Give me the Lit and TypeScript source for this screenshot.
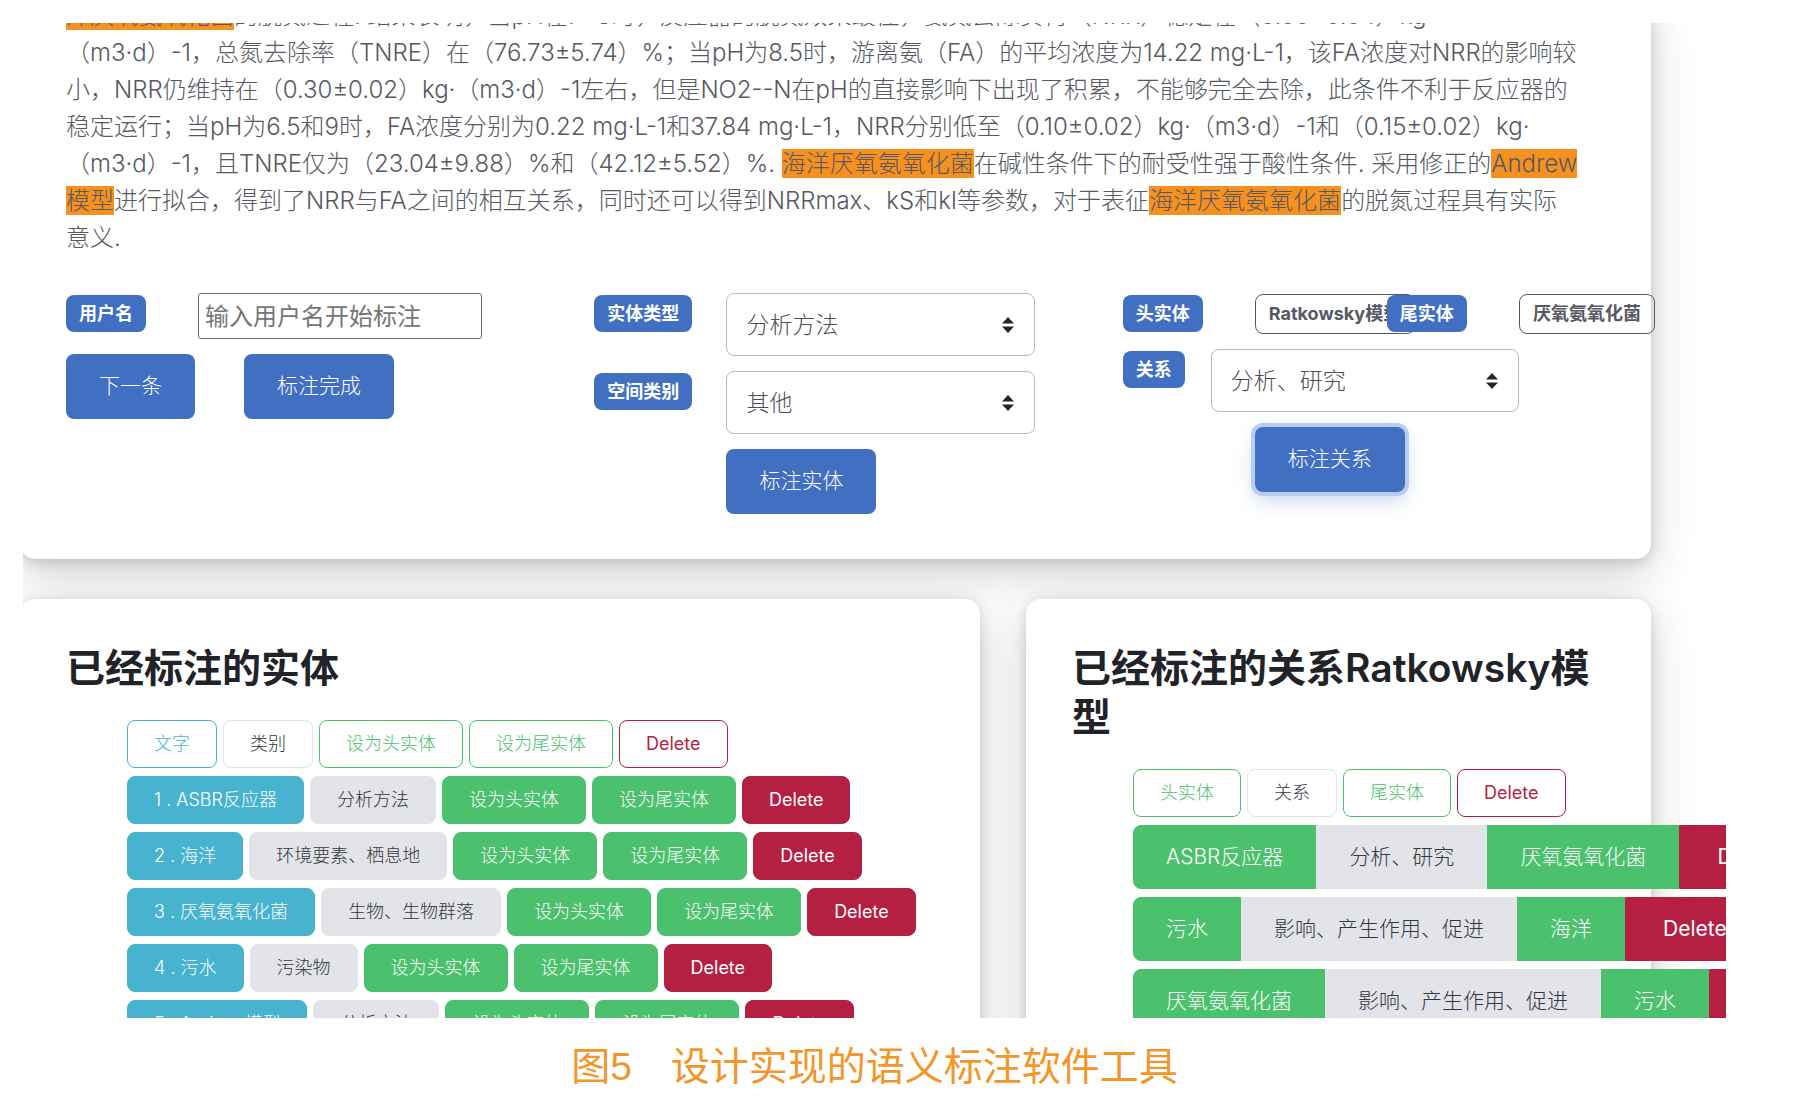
import { LitElement, html, css } from "lit";
import { customElement } from "lit/decorators.js";
import { classMap } from "lit/directives/class-map.js";

interface Entity {
  text: string;
  kind: string;
}

interface Relation {
  head: string;
  relation: string;
  tail: string;
}

const ENTITIES: Entity[] = [
  { text: "ASBR反应器", kind: "分析方法" },
  { text: "海洋", kind: "环境要素、栖息地" },
  { text: "厌氧氨氧化菌", kind: "生物、生物群落" },
  { text: "污水", kind: "污染物" },
  { text: "Andrew模型", kind: "分析方法" },
];

const RELATIONS: Relation[] = [
  { head: "ASBR反应器", relation: "分析、研究", tail: "厌氧氨氧化菌" },
  { head: "污水", relation: "影响、产生作用、促进", tail: "海洋" },
  { head: "厌氧氨氧化菌", relation: "影响、产生作用、促进", tail: "污水" },
];

@customElement("app-root")
export class AppRoot extends LitElement {
  static styles = css`
    :host {
      display: block;
      --blue: #416fc2;
      --green: #4bc06d;
      --teal: #48b3ce;
      --red: #b51f42;
      --grey: #e3e4e9;
      --ink: #212328;
      --body: #565962;
      font-family: Inter, "Noto Sans CJK SC", sans-serif;
      font-weight: 300;
      color: var(--body);
      text-spacing-trim: space-all;
    }
    * {
      box-sizing: border-box;
    }
    .figure {
      display: flex;
      flex-direction: column;
      height: 100vh;
      margin: 0;
      background: #fff;
    }
    .view {
      flex: 1;
      min-height: 0;
      overflow: hidden;
      margin: 23px 88px 0 23px;
    }
    .page {
      display: grid;
      gap: 40px;
      margin: -26px 75px 0 -3px;
    }
    .card {
      background: #fff;
      border-radius: 15px;
      box-shadow:
        0 14px 44px rgba(33, 36, 48, 0.22),
        0 3px 12px rgba(33, 36, 48, 0.16);
      padding: 44px 46px;
      min-width: 0;
    }
    .editor {
      padding: 0 0 45px 46px;
    }
    .abstract {
      margin: 0 0 37px;
      font-size: 24px;
      line-height: 37px;
      white-space: nowrap;
    }
    mark {
      background: #f6901e;
      color: inherit;
    }
    .controls {
      display: grid;
      grid-template-columns: repeat(3, minmax(0, 1fr));
      align-items: start;
    }
    .group {
      display: grid;
      grid-template-columns: repeat(12, minmax(0, 1fr));
      row-gap: 15px;
      align-items: start;
      justify-items: start;
    }
    .c2 {
      grid-column: span 2;
    }
    .c3 {
      grid-column: span 3;
    }
    .c7 {
      grid-column: span 7;
    }
    .c9 {
      grid-column: span 9;
    }
    .actions {
      grid-column: 1 / -1;
      display: flex;
      gap: 49px;
    }
    .from4 {
      grid-column: 4 / -1;
    }
    .tag {
      display: block;
      margin: 2px 0;
      padding: 0 13px;
      border-radius: 8px;
      background: var(--blue);
      color: #fff;
      font-size: 18px;
      font-weight: 700;
      line-height: 37px;
      white-space: nowrap;
    }
    .tag.outline {
      margin: 1px 0 0;
      border: 1px solid var(--body);
      background: transparent;
      color: var(--body);
      line-height: 38px;
    }
    .name {
      width: 284px;
      height: 46px;
      padding: 0 6px;
      border: 1px solid #6b6b6f;
      border-radius: 3px;
      background: #fff;
      font: inherit;
      font-size: 24px;
      font-weight: 400;
    }
    .name::placeholder {
      color: #757575;
    }
    .select {
      display: grid;
      width: 100%;
      align-items: center;
    }
    .select select,
    .select svg {
      grid-area: 1 / 1;
    }
    .select select {
      appearance: none;
      width: 100%;
      height: 63px;
      padding: 0 19px;
      border: 1px solid #b4bac9;
      border-radius: 8px;
      background: #fff;
      color: #4c4e56;
      font: inherit;
      font-size: 23px;
    }
    .select svg {
      justify-self: end;
      margin-right: 21px;
      pointer-events: none;
    }
    .btn {
      height: 65px;
      padding: 0 33px 2px;
      border: 0;
      border-radius: 8px;
      background: var(--blue);
      color: #fff;
      font: inherit;
      font-size: 21px;
      line-height: 28px;
      white-space: nowrap;
    }
    .btn.active {
      box-shadow:
        0 0 0 4px #b9cdf0,
        0 8px 20px rgba(65, 111, 194, 0.3);
    }
    .lists {
      display: grid;
      grid-template-columns: minmax(0, 960fr) minmax(0, 625fr);
      gap: 46px;
    }
    h2 {
      margin: 0 0 28px;
      color: var(--ink);
      font-size: 39px;
      font-weight: 600;
      line-height: 49px;
    }
    .rows {
      display: grid;
      gap: 8px;
      margin: 0;
      padding: 0 0 0 61px;
      list-style: none;
    }
    .row {
      display: flex;
      gap: 6px;
    }
    .chip {
      flex: none;
      height: 48px;
      padding: 0 26px;
      border: 1px solid var(--tone);
      border-radius: 8px;
      background: var(--tone);
      color: #fff;
      font: inherit;
      font-size: 18px;
      line-height: 24px;
      white-space: nowrap;
    }
    .joined {
      gap: 0;
    }
    .joined .chip {
      height: 64px;
      padding: 0 32px;
      border-radius: 0;
      font-size: 21px;
      line-height: 28px;
    }
    .joined .chip:first-child {
      border-radius: 8px 0 0 8px;
    }
    .joined .chip:last-child {
      padding: 0 37px;
      border-radius: 0 8px 8px 0;
    }
    .teal {
      --tone: var(--teal);
    }
    .green {
      --tone: var(--green);
    }
    .red {
      --tone: var(--red);
      font-weight: 400;
    }
    .grey {
      --tone: var(--grey);
      color: #34363c;
    }
    .hollow {
      background: #fff;
      color: var(--tone);
    }
    .hollow.grey {
      color: #34363c;
    }
    .caption {
      height: 92px;
      margin: 0 88px 0 23px;
      color: #f2962a;
      font-family: "Liberation Sans", "Noto Sans CJK SC", sans-serif;
      font-size: 39px;
      font-weight: 400;
      line-height: 98px;
      text-align: center;
      white-space: nowrap;
    }
  `;

  private chip(text: string, tone: string, hollow = false) {
    return html`<button
      type="button"
      class=${classMap({ chip: true, [tone]: true, hollow })}
    >${text}</button>`;
  }

  private select(id: string, value: string) {
    return html`<span class="select c7">
      <select id=${id}>
        <option>${value}</option>
      </select>
      <svg width="12" height="16" viewBox="0 0 12 16" aria-hidden="true">
        <path d="M6 0 12 6.5H0zM0 9.5h12L6 16z" fill="#26282c" />
      </svg>
    </span>`;
  }

  render() {
    return html`
      <figure class="figure">
        <div class="view">
          <main class="page">
            <section class="card editor">
              <p class="abstract">
                <mark>洋厌氧氨氧化菌</mark>的脱氮过程. 结果表明，当pH在7~8时，反应器的脱氮效果最佳，氨氮去除负荷（NRR）稳定在（0.30±0.04）kg·<br />（m3·d）-1，总氮去除率（TNRE）在（76.73±5.74）%；当pH为8.5时，游离氨（FA）的平均浓度为14.22 mg·L-1，该FA浓度对NRR的影响较<br />小，NRR仍维持在（0.30±0.02）kg·（m3·d）-1左右，但是NO2--N在pH的直接影响下出现了积累，不能够完全去除，此条件不利于反应器的<br />稳定运行；当pH为6.5和9时，FA浓度分别为0.22 mg·L-1和37.84 mg·L-1，NRR分别低至（0.10±0.02）kg·（m3·d）-1和（0.15±0.02）kg·<br />（m3·d）-1，且TNRE仅为（23.04±9.88）%和（42.12±5.52）%. <mark>海洋厌氧氨氧化菌</mark>在碱性条件下的耐受性强于酸性条件. 采用修正的<mark>Andrew<br />模型</mark>进行拟合，得到了NRR与FA之间的相互关系，同时还可以得到NRRmax、kS和kI等参数，对于表征<mark>海洋厌氧氨氧化菌</mark>的脱氮过程具有实际<br />意义.
              </p>
              <div class="controls">
                <div class="group">
                  <label class="tag c3" for="user">用户名</label>
                  <span class="c9"><input class="name" id="user" type="text" placeholder="输入用户名开始标注" /></span>
                  <div class="actions">
                    <button type="button" class="btn">下一条</button>
                    <button type="button" class="btn">标注完成</button>
                  </div>
                </div>
                <div class="group">
                  <label class="tag c3" for="entity-type">实体类型</label>
                  ${this.select("entity-type", "分析方法")}
                  <label class="tag c3" for="space-type">空间类别</label>
                  ${this.select("space-type", "其他")}
                  <button type="button" class="btn from4">标注实体</button>
                </div>
                <div class="group">
                  <span class="tag c3">头实体</span>
                  <span class="tag outline c3">Ratkowsky模型</span>
                  <span class="tag c3">尾实体</span>
                  <span class="tag outline c3">厌氧氨氧化菌</span>
                  <label class="tag c2" for="relation">关系</label>
                  ${this.select("relation", "分析、研究")}
                  <button type="button" class="btn active from4">标注关系</button>
                </div>
              </div>
            </section>
            <div class="lists">
              <section class="card">
                <h2>已经标注的实体</h2>
                <ul class="rows">
                  <li class="row">
                    ${this.chip("文字", "teal", true)}
                    ${this.chip("类别", "grey", true)}
                    ${this.chip("设为头实体", "green", true)}
                    ${this.chip("设为尾实体", "green", true)}
                    ${this.chip("Delete", "red", true)}
                  </li>
                  ${ENTITIES.map(
                    (e, i) => html`<li class="row">
                      ${this.chip(`${i + 1} . ${e.text}`, "teal")}
                      ${this.chip(e.kind, "grey")}
                      ${this.chip("设为头实体", "green")}
                      ${this.chip("设为尾实体", "green")}
                      ${this.chip("Delete", "red")}
                    </li>`
                  )}
                </ul>
              </section>
              <section class="card">
                <h2>已经标注的关系Ratkowsky模型</h2>
                <ul class="rows">
                  <li class="row">
                    ${this.chip("头实体", "green", true)}
                    ${this.chip("关系", "grey", true)}
                    ${this.chip("尾实体", "green", true)}
                    ${this.chip("Delete", "red", true)}
                  </li>
                  ${RELATIONS.map(
                    (r) => html`<li class="row joined">
                      ${this.chip(r.head, "green")}
                      ${this.chip(r.relation, "grey")}
                      ${this.chip(r.tail, "green")}
                      ${this.chip("Delete", "red")}
                    </li>`
                  )}
                </ul>
              </section>
            </div>
          </main>
        </div>
        <figcaption class="caption">图5　设计实现的语义标注软件工具</figcaption>
      </figure>
    `;
  }
}
